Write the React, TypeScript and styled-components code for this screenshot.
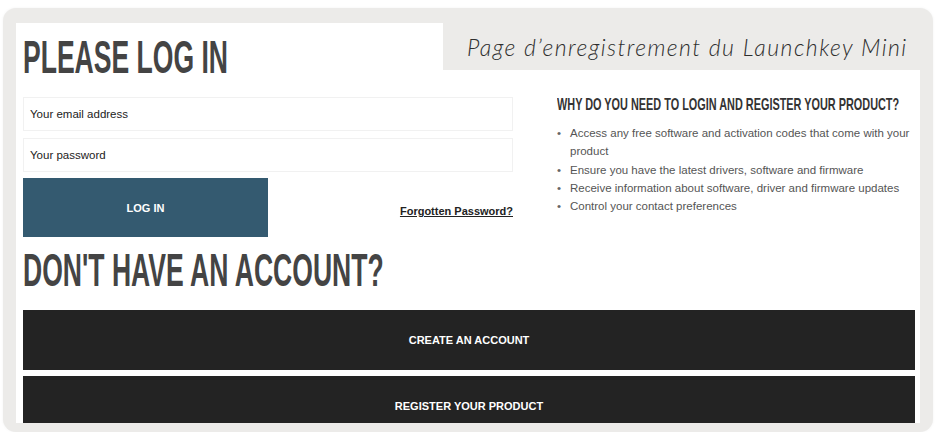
import styled, { createGlobalStyle } from 'styled-components';

const GlobalStyle = createGlobalStyle`
  html, body {
    margin: 0;
    padding: 0;
    background: #ffffff;
  }
  body {
    font-family: "Liberation Sans", Arial, sans-serif;
  }
`;

const reasons = [
  'Access any free software and activation codes that come with your product',
  'Ensure you have the latest drivers, software and firmware',
  'Receive information about software, driver and firmware updates',
  'Control your contact preferences',
];

export default function App() {
  return (
    <>
      <GlobalStyle />
      <Frame>
        <Panel>
          <HeaderRow>
            <TitleCell>
              <BigTitle>PLEASE LOG IN</BigTitle>
            </TitleCell>
            <Caption>Page d’enregistrement du Launchkey Mini</Caption>
          </HeaderRow>
          <Body>
            <Columns>
              <FormColumn>
                <Field>Your email address</Field>
                <Field>Your password</Field>
                <LoginRow>
                  <LoginButton>LOG IN</LoginButton>
                  <ForgotLink>Forgotten Password?</ForgotLink>
                </LoginRow>
              </FormColumn>
              <InfoColumn>
                <InfoTitle>WHY DO YOU NEED TO LOGIN AND REGISTER YOUR PRODUCT?</InfoTitle>
                <ReasonList>
                  {reasons.map((r) => (
                    <Reason key={r}>{r}</Reason>
                  ))}
                </ReasonList>
              </InfoColumn>
            </Columns>
            <SecondTitle>DON'T HAVE AN ACCOUNT?</SecondTitle>
            <DarkButton>CREATE AN ACCOUNT</DarkButton>
            <DarkButton>REGISTER YOUR PRODUCT</DarkButton>
          </Body>
        </Panel>
      </Frame>
    </>
  );
}

const Frame = styled.div`
  box-sizing: border-box;
  margin: 8px 0 0 3px;
  width: 930px;
  height: 424px;
  padding: 15px 13px 9px 13px;
  background: #ecebe9;
  border-radius: 13px;
  box-shadow: 0 0 3px rgba(0, 0, 0, 0.05);
`;

const Panel = styled.div`
  height: 400px;
  display: flex;
  flex-direction: column;
  overflow: hidden;
`;

const HeaderRow = styled.div`
  display: flex;
  height: 47px;
  flex-shrink: 0;
`;

const TitleCell = styled.div`
  width: 427px;
  flex-shrink: 0;
  background: #ffffff;
  padding: 11px 0 0 7px;
  box-sizing: border-box;
  position: relative;
  z-index: 1;
`;

const CondensedTitle = styled.div`
  display: inline-block;
  font-family: "Liberation Sans", Arial, sans-serif;
  font-weight: 700;
  color: #444444;
  white-space: nowrap;
  transform-origin: left top;
`;

const BigTitle = styled(CondensedTitle)`
  font-size: 46px;
  line-height: 46px;
  transform: scaleX(0.577);
`;

const Caption = styled.div`
  flex: 1;
  padding: 10px 0 0 24px;
  font-family: Lato, "Open Sans", sans-serif;
  font-style: italic;
  font-weight: 300;
  font-size: 23px;
  letter-spacing: 1.45px;
  color: #2e2e2e;
  white-space: nowrap;
`;

const Body = styled.div`
  flex: 1;
  background: #ffffff;
  padding: 0 5px 0 7px;
  display: flex;
  flex-direction: column;
`;

const Columns = styled.div`
  display: flex;
  gap: 44px;
`;

const FormColumn = styled.div`
  width: 490px;
  flex-shrink: 0;
  padding-top: 27px;
  display: flex;
  flex-direction: column;
  gap: 7px;
`;

const Field = styled.div`
  box-sizing: border-box;
  height: 34px;
  border: 1px solid #f1f1f1;
  padding: 0 6px;
  display: flex;
  align-items: center;
  font-size: 11.5px;
  color: #222222;
`;

const LoginRow = styled.div`
  display: flex;
  align-items: center;
  justify-content: space-between;
  margin-top: -1px;
`;

const LoginButton = styled.div`
  width: 245px;
  height: 59px;
  background: #345a70;
  color: #ffffff;
  font-size: 11px;
  font-weight: 700;
  display: flex;
  align-items: center;
  justify-content: center;
`;

const ForgotLink = styled.span`
  font-size: 11px;
  font-weight: 700;
  color: #222222;
  text-decoration: underline;
  white-space: nowrap;
  padding-top: 7px;
`;

const InfoColumn = styled.div`
  width: 362px;
  flex-shrink: 0;
  padding-top: 25px;
`;

const InfoTitle = styled(CondensedTitle)`
  font-size: 17px;
  line-height: 20px;
  color: #333333;
  transform: scaleX(0.64);
`;

const ReasonList = styled.ul`
  list-style: none;
  margin: 9px 0 0 0;
  padding: 0;
`;

const Reason = styled.li`
  display: flex;
  font-size: 11.5px;
  line-height: 18.3px;
  color: #555555;

  &::before {
    content: '•';
    width: 13px;
    flex-shrink: 0;
    color: #666666;
  }
`;

const SecondTitle = styled(BigTitle)`
  margin-top: 10px;
  margin-bottom: 17px;
`;

const DarkButton = styled.div`
  flex-shrink: 0;
  height: 60px;
  margin-bottom: 6px;
  background: #232323;
  color: #ffffff;
  font-size: 11px;
  font-weight: 700;
  display: flex;
  align-items: center;
  justify-content: center;
`;
